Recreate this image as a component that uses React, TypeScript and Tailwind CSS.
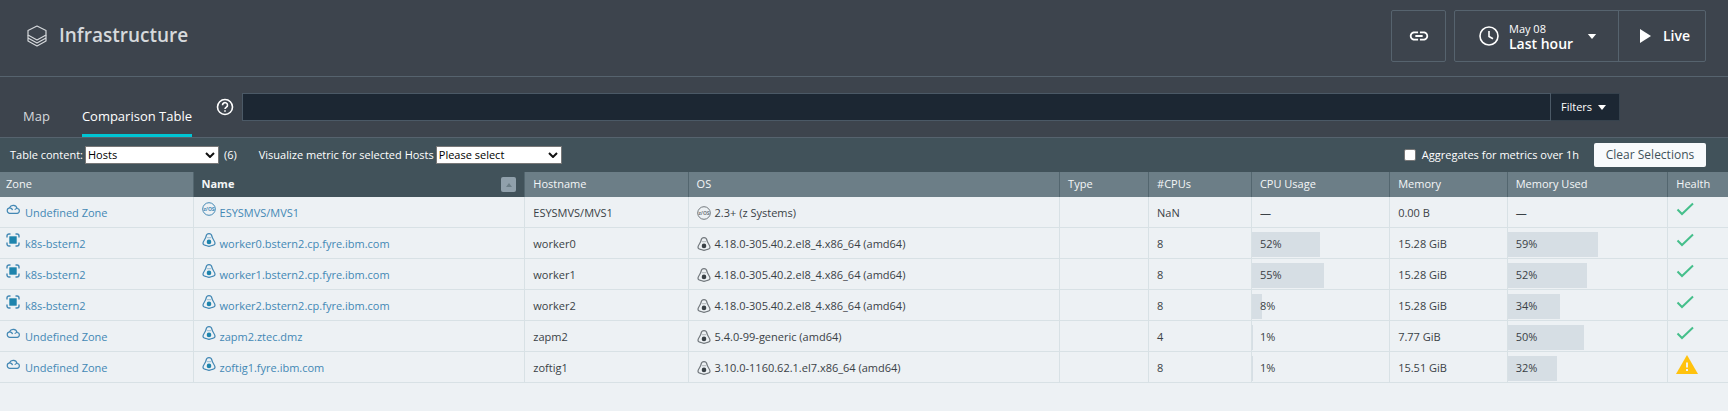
import React from "react";

type Row = {
  zone: string; zoneIcon: "cloud" | "cluster"; name: string; os: "zos" | "linux";
  host: string; version: string; cpus: string; cpu: number | null;
  memory: string; used: number | null; ok: boolean;
};

const rows: Row[] = [
  { zone: "Undefined Zone", zoneIcon: "cloud", name: "ESYSMVS/MVS1", os: "zos", host: "ESYSMVS/MVS1", version: "2.3+ (z Systems)", cpus: "NaN", cpu: null, memory: "0.00 B", used: null, ok: true },
  { zone: "k8s-bstern2", zoneIcon: "cluster", name: "worker0.bstern2.cp.fyre.ibm.com", os: "linux", host: "worker0", version: "4.18.0-305.40.2.el8_4.x86_64 (amd64)", cpus: "8", cpu: 52, memory: "15.28 GiB", used: 59, ok: true },
  { zone: "k8s-bstern2", zoneIcon: "cluster", name: "worker1.bstern2.cp.fyre.ibm.com", os: "linux", host: "worker1", version: "4.18.0-305.40.2.el8_4.x86_64 (amd64)", cpus: "8", cpu: 55, memory: "15.28 GiB", used: 52, ok: true },
  { zone: "k8s-bstern2", zoneIcon: "cluster", name: "worker2.bstern2.cp.fyre.ibm.com", os: "linux", host: "worker2", version: "4.18.0-305.40.2.el8_4.x86_64 (amd64)", cpus: "8", cpu: 8, memory: "15.28 GiB", used: 34, ok: true },
  { zone: "Undefined Zone", zoneIcon: "cloud", name: "zapm2.ztec.dmz", os: "linux", host: "zapm2", version: "5.4.0-99-generic (amd64)", cpus: "4", cpu: 1, memory: "7.77 GiB", used: 50, ok: true },
  { zone: "Undefined Zone", zoneIcon: "cloud", name: "zoftig1.fyre.ibm.com", os: "linux", host: "zoftig1", version: "3.10.0-1160.62.1.el7.x86_64 (amd64)", cpus: "8", cpu: 1, memory: "15.51 GiB", used: 32, ok: false },
];

const columns = [
  { label: "Zone", width: "w-[11.2%]" },
  { label: "Name", width: "w-[19.2%]" },
  { label: "Hostname", width: "w-[9.45%]" },
  { label: "OS", width: "w-[21.5%]" },
  { label: "Type", width: "w-[5.15%]" },
  { label: "#CPUs", width: "w-[5.95%]" },
  { label: "CPU Usage", width: "w-[8%]" },
  { label: "Memory", width: "w-[6.8%]" },
  { label: "Memory Used", width: "w-[9.3%]" },
  { label: "Health", width: "w-[3.45%]" },
];

function LayersIcon() {
  return (
    <svg viewBox="0 0 20 22" className="h-[22px] w-5" fill="none" stroke="currentColor" strokeWidth="1.2" strokeLinejoin="round" aria-hidden="true">
      <path d="M10 1 19 5.500v4.500L10 15 1 10V5.500z" />
      <path d="M1 10v3l9 5 9-5v-3M1 13v3l9 5 9-5v-3" />
    </svg>
  );
}

function CloudIcon() {
  return (
    <svg viewBox="0 0 14 12" className="h-3 w-3.5" fill="none" stroke="currentColor" strokeWidth="1.2" aria-hidden="true">
      <path d="M3.500 10.300h7.300a2.400 2.400 0 0 0 .3-4.800A4 4 0 0 0 3.500 4.800a2.800 2.800 0 0 0 0 5.500z" />
      <path d="M3.500 4.800c1.600 0 2.700.9 3 2.300M11.100 5.500c-1.200 0-1.900.4-2.300 1.200" />
    </svg>
  );
}

function ClusterIcon() {
  return (
    <svg viewBox="0 0 14 14" className="size-3.5" fill="none" stroke="currentColor" strokeWidth="1.4" aria-hidden="true">
      <path d="M1 4.500V3a2 2 0 0 1 2-2h1.500M9.500 1H11a2 2 0 0 1 2 2v1.500M13 9.500V11a2 2 0 0 1-2 2H9.500M4.500 13H3a2 2 0 0 1-2-2V9.500" />
      <path d="M3.300 3.300h7.400v7.400H3.300z" fill="#1e84ad" stroke="none" />
    </svg>
  );
}

function LinuxIcon({ dot }: { dot: string }) {
  return (
    <svg viewBox="0 0 14 14" className="size-3.5 shrink-0" fill="none" stroke="currentColor" strokeWidth="1.2" aria-hidden="true">
      <path d="M7 .7C5.200.7 4.200 2 4 3.700 3.700 5.600 1 8 1 10.300c0 1.300 1 1.900 2.400 2C4.700 12.400 5.400 13.300 7 13.300s2.300-.9 3.600-1c1.400-.1 2.400-.7 2.400-2 0-2.300-2.700-4.700-3-6.600C9.800 2 8.800.7 7 .7z" />
      <circle cx="7" cy="8.900" r="2.300" fill={dot} stroke="none" />
      <path strokeWidth="1" d="M6 4.200v1M8 4.200v1" />
    </svg>
  );
}

function ZosIcon() {
  return (
    <svg viewBox="0 0 14 14" className="size-3.5 shrink-0" fill="none" stroke="currentColor" aria-hidden="true">
      <circle cx="7" cy="7" r="6.300" />
      <text x="7" y="8.800" fontSize="5" fontWeight="700" textAnchor="middle" fill="currentColor" stroke="none">z/OS</text>
    </svg>
  );
}

function Usage({ value }: { value: number | null }) {
  if (value === null) return <span className="px-2">—</span>;
  return (
    <div className="flex h-[25px] items-center">
      <div className="h-full bg-[#d6dee4]" style={{ width: `${value * 0.96}%` }} />
      <span className="absolute left-2">{value}%</span>
    </div>
  );
}

const th = "h-[25px] border-[#53666f] py-0 pr-2 text-left";
const cell = "h-[31px] border-b border-[#d8e1e5] pb-0 whitespace-nowrap";
const td = `${cell} border-r px-2 pt-0.5`;
const zoneTd = `${cell} border-r pr-2 pl-1.5 pt-0.5`;
const meterTd = `${cell} relative border-r px-0 pt-0.5`;
const healthTd = `${cell} px-2 pt-0`;

export default function App() {
  return (
    <div className="min-h-screen bg-[#edf1f4] font-['Open_Sans',sans-serif] text-xs text-[#3a4146]">
      <header className="flex h-[77px] items-center justify-between border-b border-[#56636e] bg-[#3d444d] pr-[22px] pl-[27px] text-[#d6d9dc]">
        <div className="mb-1 flex items-center gap-3">
          <LayersIcon />
          <h1 className="text-[19px] font-semibold">Infrastructure</h1>
        </div>
        <div className="mb-1 flex h-[52px] gap-2 text-white">
          <button aria-label="Copy link" className="flex w-[55px] items-center justify-center rounded-xs border border-[#56636e]">
            <svg viewBox="0 0 24 24" className="size-[22px]" fill="currentColor" aria-hidden="true"><path d="M3.900 12c0-1.710 1.390-3.100 3.100-3.100h4V7H7c-2.760 0-5 2.240-5 5s2.240 5 5 5h4v-1.900H7c-1.710 0-3.100-1.390-3.100-3.100zM8 13h8v-2H8v2zm9-6h-4v1.900h4c1.710 0 3.100 1.390 3.100 3.100s-1.390 3.100-3.100 3.100h-4V17h4c2.760 0 5-2.240 5-5s-2.240-5-5-5z" /></svg>
          </button>
          <div className="flex rounded-xs border border-[#56636e]">
            <button className="flex w-[164px] items-center border-r border-[#56636e] pl-6 text-left">
              <svg viewBox="0 0 20 20" className="size-5" fill="none" stroke="currentColor" strokeWidth="1.600" aria-hidden="true"><circle cx="10" cy="10" r="9" /><path d="M10 5v5.500l4 2.300" /></svg>
              <span className="ml-2.5 w-[66px] leading-[15px] whitespace-nowrap"><span className="block text-[11px]">May 08</span><span className="block text-sm leading-[15px] font-semibold">Last hour</span></span>
              <svg viewBox="0 0 10 6" className="ml-3 h-[5px] w-2.5" fill="currentColor" aria-hidden="true"><path d="M0 0h10L5 6z" /></svg>
            </button>
            <button className="flex w-[86px] items-center gap-3 pl-[21px] text-sm font-semibold">
              <svg viewBox="0 0 11 14" className="h-3.5 w-[11px]" fill="currentColor" aria-hidden="true"><path d="M0 0v14l11-7z" /></svg>
              Live
            </button>
          </div>
        </div>
      </header>

      <div className="flex h-[61px] items-center border-b border-[#56636e] bg-[#3d444d] pr-[108px] pl-[23px] text-white">
        <nav className="flex gap-8 self-stretch text-[13px]">
          <a href="#map" className="flex items-end pb-3 text-[#d6d9dc]">Map</a>
          <a href="#comparison" className="flex items-end border-b-[3px] border-[#00c5d4] pb-[9px]">Comparison Table</a>
        </nav>
        <button aria-label="Help" className="mr-2 ml-6">
          <svg viewBox="0 0 18 18" className="size-[18px]" fill="none" stroke="currentColor" strokeWidth="1.600" aria-hidden="true"><circle cx="9" cy="9" r="7.500" /><path d="M6.500 7.200a2.500 2.500 0 1 1 3.900 2c-.9.600-1.400.9-1.400 1.900M9 12.200v1.600" /></svg>
        </button>
        <input aria-label="Search" className="h-7 min-w-0 flex-1 border border-[#4b5966] bg-[#1c2733] px-2 outline-none" />
        <button className="flex h-7 w-[69px] items-center gap-1.5 border border-l-0 border-[#36424d] bg-[#1c2733] pl-2.5 text-[11px]">
          Filters
          <svg viewBox="0 0 8 5" className="h-[5px] w-2" fill="currentColor" aria-hidden="true"><path d="M0 0h8L4 5z" /></svg>
        </button>
      </div>

      <div className="flex h-[34px] items-center bg-[#41525a] pr-[22px] pl-2.5 text-[11px] text-white">
        <label htmlFor="content">Table content:</label>
        <div className="relative ml-0.5">
          <select id="content" className="block h-[18px] w-[134px] appearance-none border border-[#777] bg-white px-0.5 text-[11px] leading-4 text-black"><option>Hosts</option></select>
          <svg viewBox="0 0 10 6" className="pointer-events-none absolute top-1.5 right-1 h-1.5 w-2.5" fill="none" stroke="#111" strokeWidth="2" aria-hidden="true"><path d="m1 1 4 4 4-4" /></svg>
        </div>
        <span className="ml-[5px]">(6)</span>
        <label htmlFor="metric" className="ml-[22px]">Visualize metric for selected Hosts</label>
        <div className="relative ml-0.5">
          <select id="metric" className="block h-[18px] w-[126px] appearance-none border border-[#777] bg-white px-0.5 text-[11px] leading-4 text-black"><option>Please select</option></select>
          <svg viewBox="0 0 10 6" className="pointer-events-none absolute top-1.5 right-1 h-1.5 w-2.5" fill="none" stroke="#111" strokeWidth="2" aria-hidden="true"><path d="m1 1 4 4 4-4" /></svg>
        </div>
        <label className="ml-auto flex items-center gap-1.5">
          <input type="checkbox" className="size-3 appearance-none rounded-xs border border-[#777] bg-white checked:bg-[#1e84ad]" />
          Aggregates for metrics over 1h
        </label>
        <button className="ml-[15px] h-6 w-[112px] rounded-xs bg-[#f8fafc] text-xs text-[#41525a]">Clear Selections</button>
      </div>

      <table className="w-full table-fixed border-separate border-spacing-0 text-[11px]">
        <thead className="text-[#f4f6f7]">
          <tr>
            {columns.map(({ label, width }) => (
              <th key={label} scope="col" className={`${th} ${width} ${label === "Name" ? "bg-[#41525a] font-bold" : "bg-[#6c7e87] font-medium"} ${label === "Zone" ? "pl-1.5" : "pl-2"} ${label === "Health" ? "" : "border-r"}`}>
                {label === "Name" ? (
                  <div className="flex items-center justify-between">
                    Name
                    <button aria-label="Sort ascending" className="flex size-[15px] items-center justify-center rounded-xs bg-[#90a0ab]">
                      <svg viewBox="0 0 6 4" className="h-1 w-1.5" fill="#6c7e87" aria-hidden="true"><path d="M3 0 6 4H0z" /></svg>
                    </button>
                  </div>
                ) : label}
              </th>
            ))}
          </tr>
        </thead>
        <tbody>
          {rows.map((r) => (
            <tr key={r.name}>
              <td className={zoneTd}>
                <a href="#zone" className="flex items-center gap-[5px] text-[#4388b4]">
                  <span className="mb-2">{r.zoneIcon === "cloud" ? <CloudIcon /> : <ClusterIcon />}</span>{r.zone}
                </a>
              </td>
              <td className={td}>
                <a href="#host" className="flex items-center gap-1 text-[#4388b4]">
                  <span className="mb-2">{r.os === "zos" ? <ZosIcon /> : <LinuxIcon dot="#1e84ad" />}</span>{r.name}
                </a>
              </td>
              <td className={td}>{r.host}</td>
              <td className={td}>
                <div className="flex items-center gap-1"><span className="text-[#73797e]">{r.os === "zos" ? <ZosIcon /> : <LinuxIcon dot="#3a4146" />}</span>{r.version}</div>
              </td>
              <td className={td} />
              <td className={td}>{r.cpus}</td>
              <td className={meterTd}><Usage value={r.cpu} /></td>
              <td className={td}>{r.memory}</td>
              <td className={meterTd}><Usage value={r.used} /></td>
              <td className={healthTd}>
                {r.ok ? (
                  <svg viewBox="0 0 18 14" className="mb-1.5 h-3.5 w-[18px]" fill="none" stroke="#45bf8b" strokeWidth="2" role="img" aria-label="Healthy"><path d="m1.500 7.500 4.500 4.500L17 1.500" /></svg>
                ) : (
                  <svg viewBox="0 0 22 19" className="mb-1.5 h-[19px] w-[22px]" role="img" aria-label="Warning"><path d="M11 0 22 19H0z" fill="#ffc20e" /><path d="M11 7.500v5M11 14v2" stroke="#edf1f4" strokeWidth="2" /></svg>
                )}
              </td>
            </tr>
          ))}
        </tbody>
      </table>
    </div>
  );
}
